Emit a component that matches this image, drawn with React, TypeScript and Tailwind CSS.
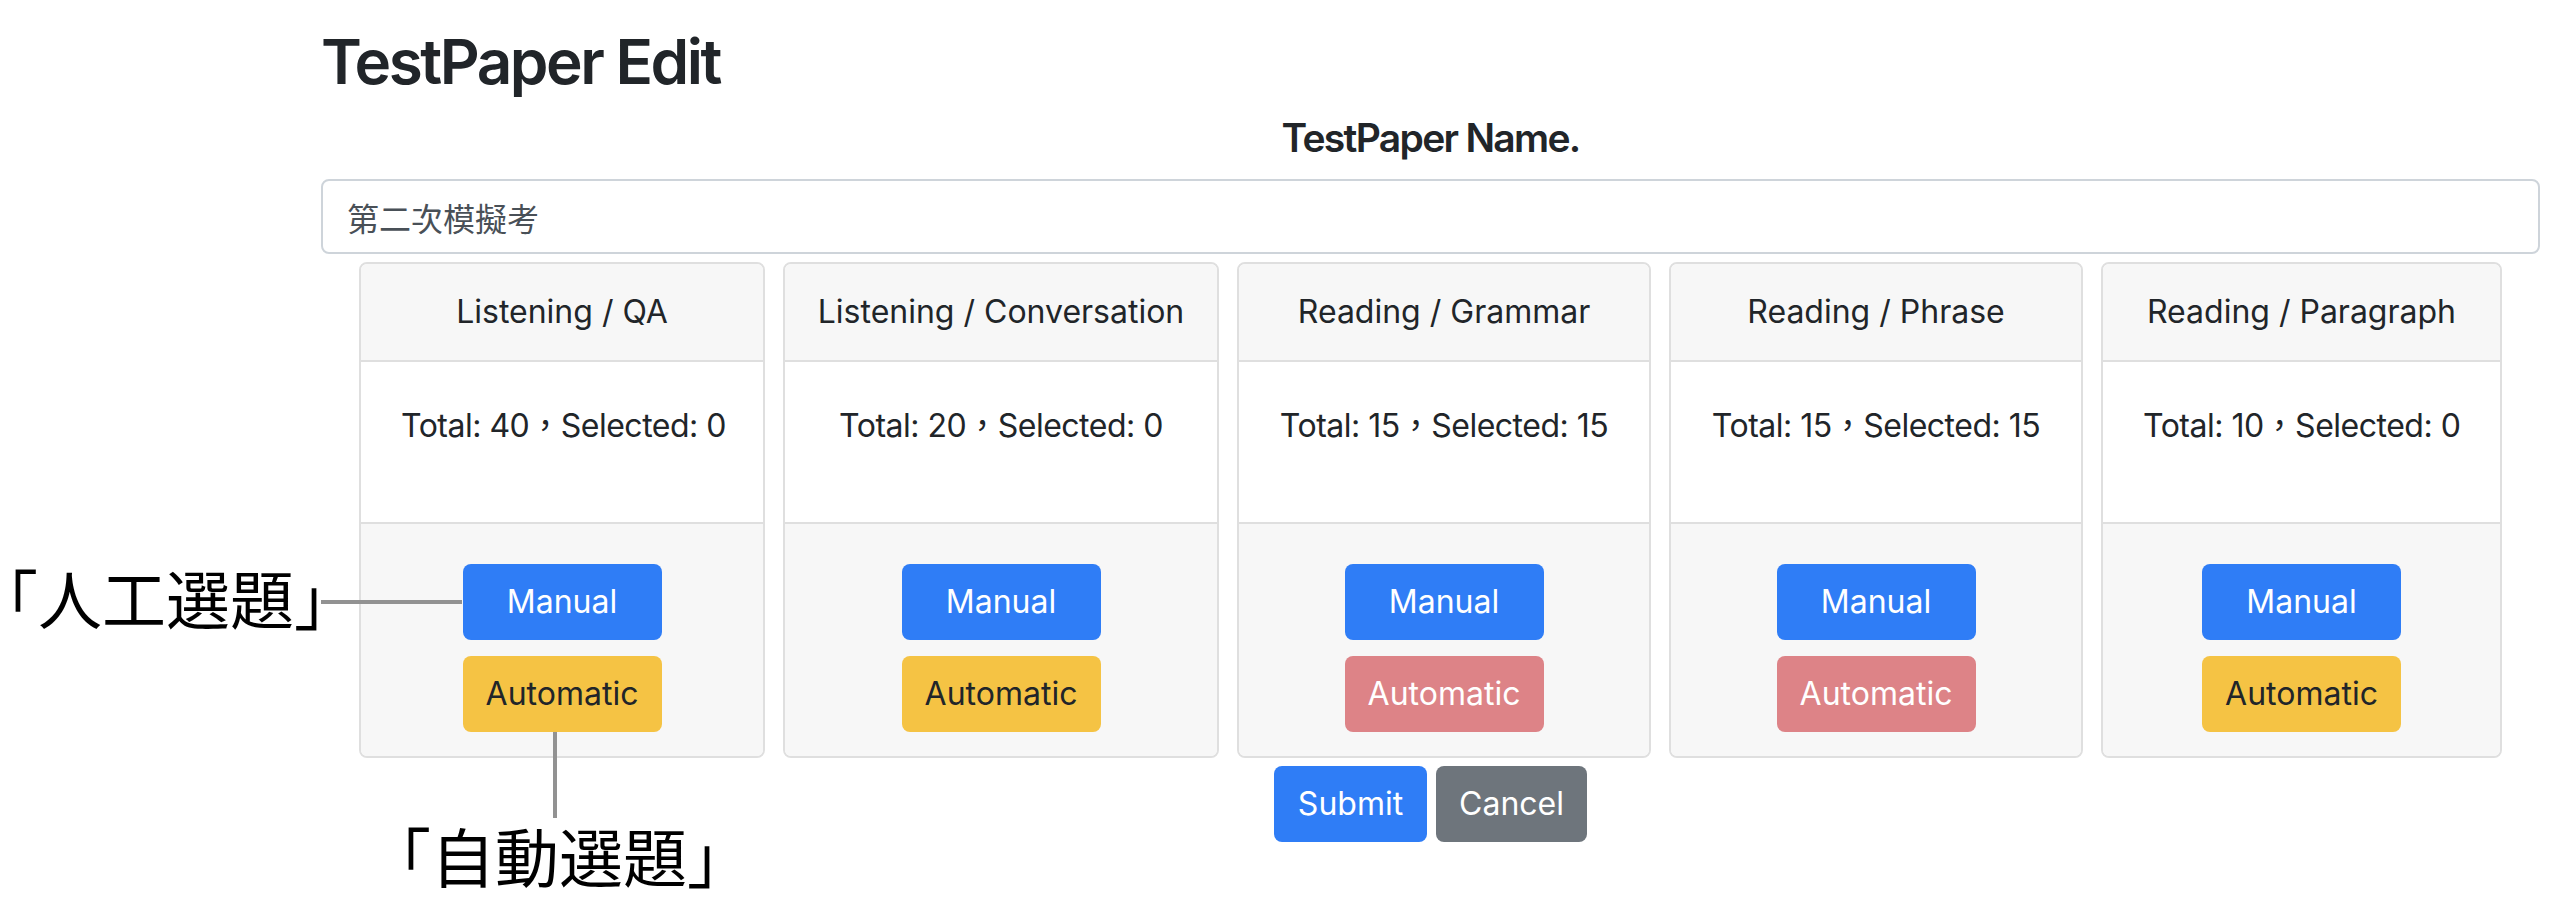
const cards = [
  { title: "Listening / QA", total: 40, selected: 0, width: "w-[406px]", auto: "warning" },
  { title: "Listening / Conversation", total: 20, selected: 0, width: "w-[436px]", auto: "warning" },
  { title: "Reading / Grammar", total: 15, selected: 15, width: "w-[414px]", auto: "danger" },
  { title: "Reading / Phrase", total: 15, selected: 15, width: "w-[414px]", auto: "danger" },
  { title: "Reading / Paragraph", total: 10, selected: 0, width: "w-[401px]", auto: "warning" },
];

function TypeCard({ title, total, selected, width, auto }: (typeof cards)[number]) {
  return (
    <div className={`${width} flex flex-col border-2 border-[#dfdfdf] rounded-[8px] overflow-hidden`}>
      <div className="bg-[#f7f7f7] border-b-2 border-[#dfdfdf] py-[24px] text-center text-[32px] leading-[48px] whitespace-nowrap">
        {title}
      </div>
      <div className="bg-white p-[40px] text-center">
        <p className="text-[32px] leading-[48px] mb-[32px] whitespace-nowrap tracking-[-0.5px]">
          Total: {total}，Selected: {selected}
        </p>
      </div>
      <div className="bg-[#f7f7f7] border-t-2 border-[#dfdfdf] pt-[40px] pb-[24px] flex flex-col items-center gap-4">
        <button className="w-[199px] h-[76px] rounded-[8px] bg-[#2f7df6] text-white text-[32px]">Manual</button>
        {auto === "warning" ? (
          <button className="w-[199px] h-[76px] rounded-[8px] bg-[#f5c344] text-[#212529] text-[32px]">Automatic</button>
        ) : (
          <button className="w-[199px] h-[76px] rounded-[8px] bg-[#dd8387] text-white text-[32px]">Automatic</button>
        )}
      </div>
    </div>
  );
}

export default function App() {
  return (
    <div className="relative min-h-screen bg-white text-[#212529] font-['Inter','Noto_Sans_CJK_TC',sans-serif]">
      <div className="pl-[321px] pr-[18px] pt-[25px]">
        <h2 className="text-[62px] leading-[1.2] font-semibold tracking-[-2.5px]">TestPaper Edit</h2>
        <h5 className="mt-[16px] text-center text-[39px] leading-[1.2] font-semibold tracking-[-1.7px]">TestPaper Name.</h5>
        <input
          defaultValue="第二次模擬考"
          className="mt-[17px] block w-full h-[75px] px-[24px] border-2 border-[#ced4da] rounded-[8px] text-[32px] text-[#495057] outline-none"
        />
        <div className="mt-2 flex justify-center gap-[18px]">
          {cards.map((c) => (
            <TypeCard key={c.title} {...c} />
          ))}
        </div>
        <div className="mt-[8px] flex justify-center gap-[9px]">
          <button className="w-[153px] h-[76px] rounded-[8px] bg-[#2f7df6] text-white text-[32px]">Submit</button>
          <button className="w-[151px] h-[76px] rounded-[8px] bg-[#6e757c] text-white text-[32px]">Cancel</button>
        </div>
      </div>

      {/* callouts */}
      <div className="absolute left-[6px] top-[564px] text-[64px] leading-[64px] text-black font-['Noto_Sans_CJK_JP',sans-serif] [font-feature-settings:'halt'] whitespace-nowrap">
        「人工選題」
      </div>
      <div className="absolute left-[321px] top-[600px] w-[141px] h-[4px] bg-[#929292]" />
      <div className="absolute left-[553px] top-[732px] w-[4px] h-[86px] bg-[#929292]" />
      <div className="absolute left-[399px] top-[822px] text-[64px] leading-[64px] text-black font-['Noto_Sans_CJK_JP',sans-serif] [font-feature-settings:'halt'] whitespace-nowrap">
        「自動選題」
      </div>
    </div>
  );
}
